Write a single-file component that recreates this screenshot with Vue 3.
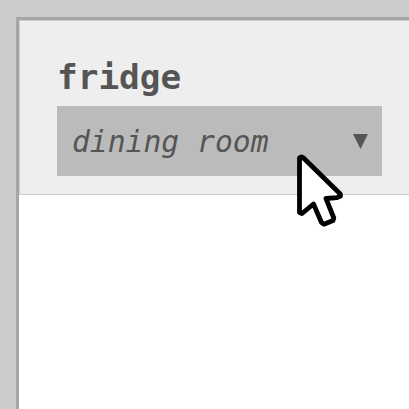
<template>
  <div class="desk">
    <div class="window">
      <header class="panel">
        <h1 class="title">fridge</h1>
        <div class="select">
          <span class="value">dining room</span>
          <svg class="arrow" width="15" height="15" viewBox="0 0 15 15"><path d="M0 0H15L7.5 15Z" fill="#555" /></svg>
        </div>
      </header>
    </div>
    <svg class="cursor" width="52" height="76" viewBox="0 0 52 76">
      <path d="M5.5 5V59.5L8 60.5L19.5 51L27.5 69.5L30 71.2L39 67.5L39.8 65L32 45.5L43 44.7L46.5 43L46.3 41L9.5 5L7.5 4Z" fill="#fff" stroke="#000" stroke-width="4.8" stroke-linejoin="round" />
    </svg>
  </div>
</template>

<script setup>
</script>

<style>
body { margin: 0; overflow: hidden; }
</style>

<style scoped>
.desk { position: relative; box-sizing: border-box; height: 409px; padding: 17px 0 0 16px; background: #ccc; overflow: hidden; }
.window { height: 392px; border: solid #a6a6a6; border-width: 3px 0 0 3px; box-sizing: border-box; background: #fff; }
.panel { box-sizing: border-box; height: 175px; padding: 37px 27px 0 37px; background: #eee; border: solid #ccc; border-width: 1px 0 1px 1px; }
.title { margin: 0; height: 48px; font: bold 34.4px/38px "DejaVu Sans Mono", monospace; color: #555; }
.select { display: flex; align-items: center; justify-content: space-between; box-sizing: border-box; height: 70px; padding: 0 14px 0 15px; background: #bbb; }
.value { padding-top: 2px; font: italic 29.7px/40px "DejaVu Sans Mono", monospace; color: #555; white-space: pre; }
.arrow { display: block; padding-top: 1px; }
.cursor { position: absolute; left: 294px; top: 153px; }
</style>
